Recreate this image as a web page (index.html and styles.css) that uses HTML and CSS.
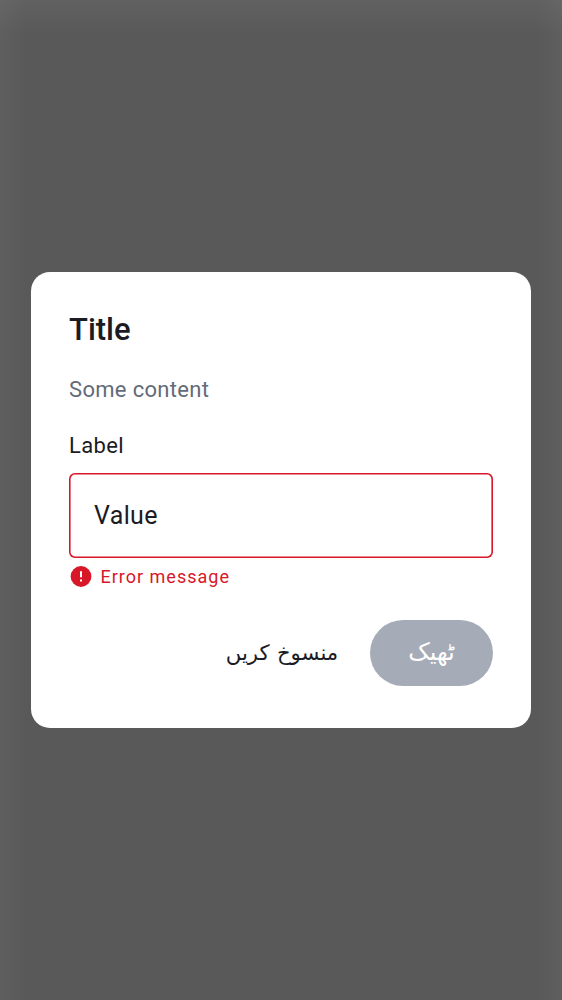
FILE: index.html
```html
<!DOCTYPE html>
<html lang="ur">
<head>
<meta charset="utf-8">
<title>Title</title>
<link rel="stylesheet" href="styles.css">
</head>
<body>
<main class="scrim">
  <section class="dialog" role="dialog">
    <h1 class="title">Title</h1>
    <p class="content">Some content</p>
    <label class="label" for="value">Label</label>
    <input class="field" id="value" value="Value">
    <div class="error">
      <svg class="error-icon" viewBox="0 0 22 22"><circle cx="11" cy="11.5" r="10.4" fill="#d81729"/><path d="M11 6.3v6M11 14.5v2.1" stroke="#fff" stroke-width="2"/></svg>
      <span>Error message</span>
    </div>
    <div class="actions">
      <button class="button cancel" dir="rtl">منسوخ کریں</button>
      <button class="button confirm" dir="rtl">ٹھیک</button>
    </div>
  </section>
</main>
</body>
</html>
```

FILE: styles.css
```css
* { box-sizing: border-box; }
body { margin: 0; font-family: Roboto, "Noto Sans", "DejaVu Sans", sans-serif; color: #1b1b23; }
.scrim {
  height: 1000px;
  display: flex;
  align-items: center;
  justify-content: center;
  background:
    linear-gradient(to bottom, #ffffff0c, #ffffff00 36px),
    linear-gradient(to right, #ffffff09, #ffffff00 26px, #ffffff00 536px, #ffffff09),
    #595959;
}
.dialog { width: 500px; height: 456px; padding: 38px; border-radius: 19px; background: #fff; display: flex; flex-direction: column; }
.title { margin: 0; padding-top: 1px; font-size: 31px; line-height: 38px; font-weight: 500; }
.content { margin: 24px 0 0; font-size: 22px; line-height: 34px; letter-spacing: .32px; color: #636b78; }
.label { margin-top: 22px; font-size: 22px; line-height: 34px; letter-spacing: .34px; }
.field { margin-top: 10px; width: 424px; height: 85px; padding: 0 25px; border: 0; border-radius: 6px; box-shadow: inset 0 0 0 1.6px #d81729; font: 25px Roboto, sans-serif; letter-spacing: .35px; color: #1b1b23; }
.error { display: flex; align-items: center; gap: 8.5px; height: 28px; margin-top: 4px; padding-left: 1px; font-size: 18px; letter-spacing: 1px; color: #d81729; }
.error-icon { width: 22px; height: 22px; overflow: visible; }
.actions { display: flex; justify-content: flex-end; margin-top: 30px; }
.button { border: 0; height: 66px; font: 22px Roboto, "Noto Sans", "DejaVu Sans", sans-serif; background: none; color: #1b1b23; }
.cancel { width: 176px; padding: 0 0 2px; font-size: 21.2px; word-spacing: 2px; }
.confirm { width: 123px; padding: 0 0 3px; border-radius: 33px; background: #a5acb7; color: #fff; font-size: 24px; }
```
